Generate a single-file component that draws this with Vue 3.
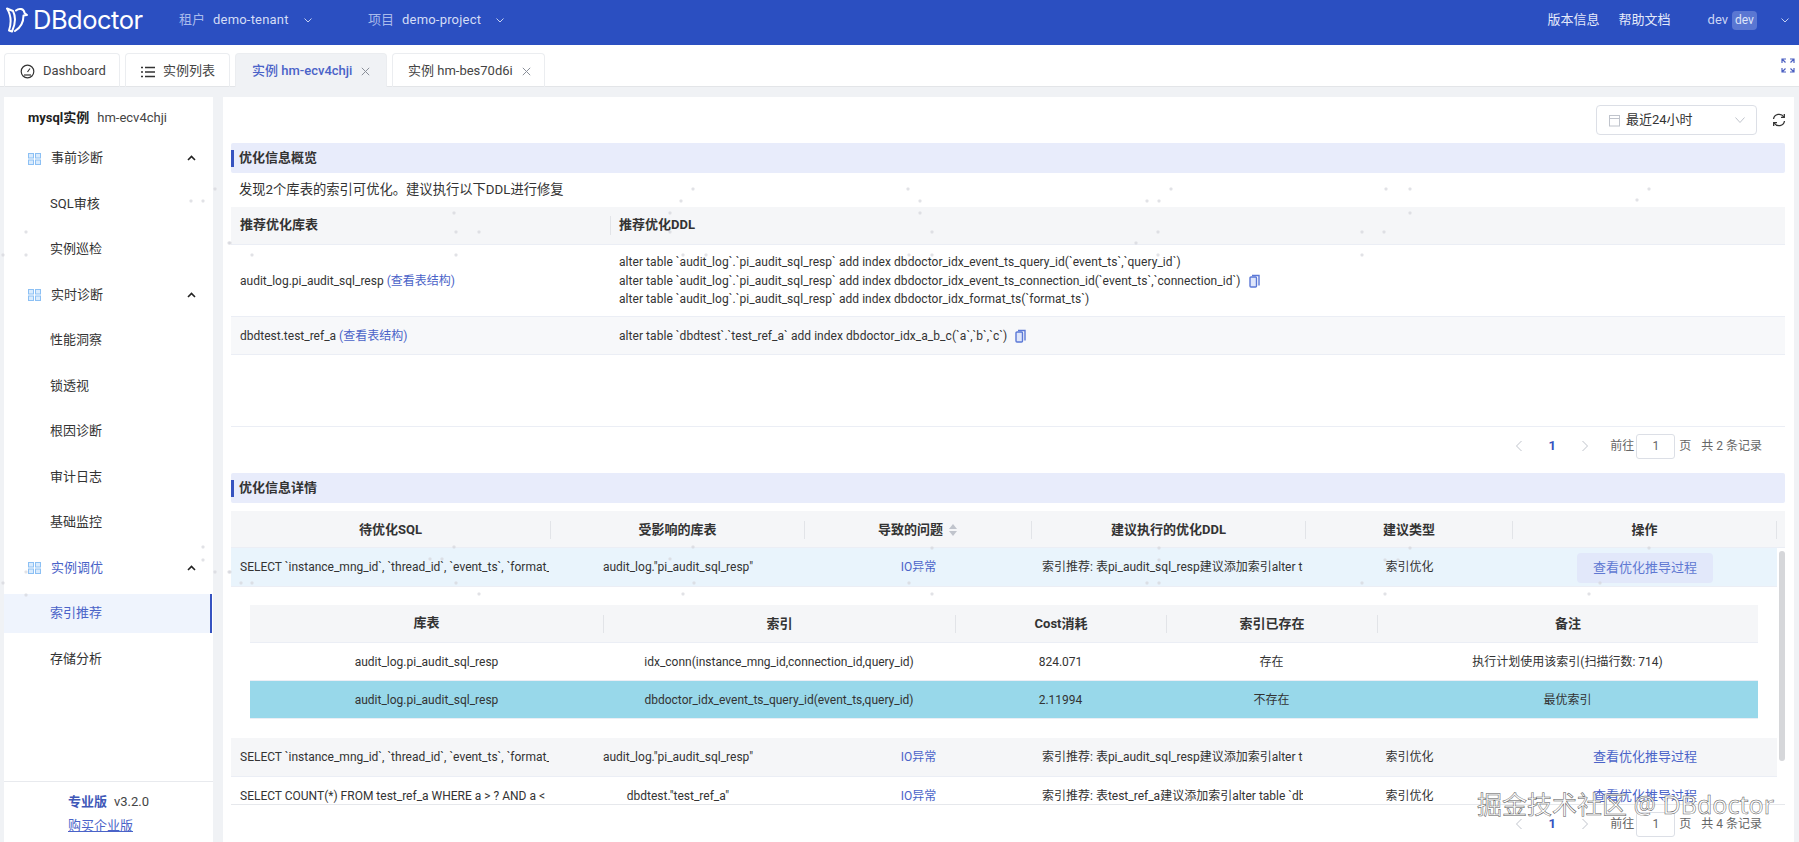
<script setup>
const menu = [
  { label: '事前诊断', group: true },
  { label: 'SQL审核' },
  { label: '实例巡检' },
  { label: '实时诊断', group: true },
  { label: '性能洞察' },
  { label: '锁透视' },
  { label: '根因诊断' },
  { label: '审计日志' },
  { label: '基础监控' },
  { label: '实例调优', group: true, tinted: true },
  { label: '索引推荐', active: true },
  { label: '存储分析' }
]
const ddl = [
  'alter table `audit_log`.`pi_audit_sql_resp` add index dbdoctor_idx_event_ts_query_id(`event_ts`,`query_id`)',
  'alter table `audit_log`.`pi_audit_sql_resp` add index dbdoctor_idx_event_ts_connection_id(`event_ts`,`connection_id`)',
  'alter table `audit_log`.`pi_audit_sql_resp` add index dbdoctor_idx_format_ts(`format_ts`)'
]
const sqlA = 'SELECT `instance_mng_id`, `thread_id`, `event_ts`, `format_sql`, `query_id`'
const ddlA = '索引推荐: 表pi_audit_sql_resp建议添加索引alter table `audit_log`'
const specks = [[454,213],[456,232],[479,232],[252,255],[456,255],[693,189],[681,201],[670,213],[670,232],[683,255],[706,255],[230,243],[908,189],[920,201],[920,213],[932,232],[909,255],[932,255],[1171,189],[1147,201],[1159,201],[1158,232],[1136,243],[1158,255],[1386,189],[1410,189],[1410,213],[1362,232],[1384,232],[1362,255],[454,547],[693,547],[670,559],[430,559],[442,559],[230,572],[241,583],[252,583],[456,583],[694,583],[479,594],[683,594],[932,548],[1159,548],[1159,560],[920,570],[909,583],[1147,583],[1159,583],[932,594],[1410,548],[1649,548],[1385,560],[1398,560],[1362,583],[1600,583],[1385,594],[1589,594],[1649,189],[1637,200],[215,189],[191,201],[203,201],[26,232],[3,255],[26,255],[229,243],[203,547],[203,560],[215,572],[26,572],[3,583],[26,595],[229,572]]
</script>

<template>
  <div class="page">
    <header class="topbar">
      <div class="logo">
        <svg class="logo-mark" width="22" height="26" viewBox="0 0 22 26" fill="none" stroke="#fff" stroke-width="2" stroke-linejoin="round" stroke-linecap="round">
          <path d="M1 1.500 L7 4 C9.500 9 9.500 17 6 24.500 L3 23.500 C5.500 16 5 8 1 1.500 Z" />
          <path d="M10 3.500 C13 .8 18 1.500 18.500 6 L21 8 L17.500 8.500 C17.500 15 14 21 9 24" />
        </svg>
        <span class="logo-text">DBdoctor</span>
      </div>
      <div class="scope scope-first">
        <span class="scope-key">租户</span><span class="scope-val">demo-tenant</span>
        <svg class="chev" width="10" height="10" viewBox="0 0 10 10"><path d="M1.500 3.500 5 7l3.500-3.500" fill="none" stroke="currentColor" stroke-width="1" /></svg>
      </div>
      <div class="scope scope-second">
        <span class="scope-key">项目</span><span class="scope-val">demo-project</span>
        <svg class="chev" width="10" height="10" viewBox="0 0 10 10"><path d="M1.500 3.500 5 7l3.500-3.500" fill="none" stroke="currentColor" stroke-width="1" /></svg>
      </div>
      <div class="top-right">
        <a class="top-link">版本信息</a>
        <a class="top-link">帮助文档</a>
        <span class="user">dev</span>
        <span class="user-badge">dev</span>
        <svg class="chev user-chev" width="10" height="10" viewBox="0 0 10 10"><path d="M1.500 3.500 5 7l3.500-3.500" fill="none" stroke="currentColor" stroke-width="1" /></svg>
      </div>
    </header>

    <nav class="tabs">
      <div class="tab tab-dash">
        <svg width="15" height="15" viewBox="0 0 15 15" fill="none" stroke="#333" stroke-width="1.200"><circle cx="7.500" cy="7.500" r="6.300" /><path d="M7.500 8 10 4.500" /><path d="M4 11h7" /></svg>
        <span>Dashboard</span>
      </div>
      <div class="tab tab-list">
        <svg width="14" height="12" viewBox="0 0 14 12" stroke="#333" stroke-width="1.300"><path d="M0 1.500h2M4 1.500h10M0 6h2M4 6h10M0 10.500h2M4 10.500h10" /></svg>
        <span>实例列表</span>
      </div>
      <div class="tab tab-on">
        <span>实例 hm-ecv4chji</span>
        <svg class="close" width="9" height="9" viewBox="0 0 9 9"><path d="M.8.8l7.400 7.400M8.200.8.800 8.200" stroke="#8a8f99" stroke-width="1" /></svg>
      </div>
      <div class="tab tab-other">
        <span>实例 hm-bes70d6i</span>
        <svg class="close" width="9" height="9" viewBox="0 0 9 9"><path d="M.8.8l7.400 7.400M8.200.8.800 8.200" stroke="#8a8f99" stroke-width="1" /></svg>
      </div>
      <svg class="expand" width="14" height="15" viewBox="0 0 14 15" fill="none" stroke="#4a5fc1" stroke-width="1.200"><path d="M1 5V1h4M1 1l3.500 3.500M13 5V1H9M13 1 9.500 4.500M1 10v4h4M1 14l3.500-3.500M13 10v4H9M13 14l-3.500-3.500" /></svg>
    </nav>

    <div class="body">
      <aside class="side">
        <div class="side-title"><b>mysql实例</b><span>hm-ecv4chji</span></div>
        <ul class="menu">
          <li v-for="m in menu" :key="m.label" class="menu-item" :class="{ 'is-group': m.group, 'is-active': m.active, 'is-tinted': m.tinted }">
            <svg v-if="m.group" class="menu-icon" width="13" height="12" viewBox="0 0 13 12" fill="#d9ebfd" stroke="#8cc0f4" stroke-width="1"><rect x=".5" y=".5" width="5" height="4.500" /><rect x="7.500" y=".5" width="5" height="4.500" /><rect x=".5" y="7" width="5" height="4.500" /><rect x="7.500" y="7" width="5" height="4.500" /></svg>
            <span>{{ m.label }}</span>
            <svg v-if="m.group" class="menu-caret" width="9" height="6" viewBox="0 0 9 6"><path d="M1 5 4.500 1.500 8 5" fill="none" stroke="#222" stroke-width="1.600" /></svg>
          </li>
        </ul>
        <div class="side-foot">
          <div><b class="edition">专业版</b><span class="version">v3.2.0</span></div>
          <a class="buy">购买企业版</a>
        </div>
      </aside>

      <main class="main">
        <div class="toolbar">
          <div class="date">
            <svg width="13" height="13" viewBox="0 0 13 13" fill="none" stroke="#c0c4cc"><rect x="1.500" y="1.500" width="10" height="10.500" /><path d="M1.500 4.500h10" /></svg>
            <span>最近24小时</span>
            <svg class="date-chev" width="12" height="12" viewBox="0 0 12 12"><path d="M1.500 3.500 6 8.500l4.500-5" fill="none" stroke="#c0c4cc" /></svg>
          </div>
          <svg class="refresh" width="14" height="14" viewBox="0 0 14 14" fill="none" stroke="#333" stroke-width="1.300"><path d="M1.500 6A5.600 5.600 0 0 1 11.800 4" /><path d="M12.500 8A5.600 5.600 0 0 1 2.200 10" /><path d="M12.300 1v3.300H9M1.700 13V9.700H5" /></svg>
        </div>

        <h3 class="section">优化信息概览</h3>
        <p class="desc">发现2个库表的索引可优化。建议执行以下DDL进行修复</p>

        <div class="t1">
          <div class="t1-row t1-head">
            <div class="t1-cell"><span>推荐优化库表</span></div>
            <div class="t1-cell t1-sep"><span>推荐优化DDL</span></div>
          </div>
          <div class="t1-row t1-tall">
            <div class="t1-cell t1-text"><span>audit_log.pi_audit_sql_resp <a class="link">(查看表结构)</a></span></div>
            <div class="t1-cell t1-ddl">
              <div v-for="(d, i) in ddl" :key="d" class="ddl-line">
                {{ d }}
                <svg v-if="i === 1" class="copy" width="11" height="14" viewBox="0 0 11 14" fill="none" stroke="#5b78d6" stroke-width="1.400"><path d="M3 1.500h7v10" /><rect x="1" y="3" width="6.500" height="10" rx="1" fill="#dfe6fa" /></svg>
              </div>
            </div>
          </div>
          <div class="t1-row t1-zebra">
            <div class="t1-cell t1-text"><span>dbdtest.test_ref_a <a class="link">(查看表结构)</a></span></div>
            <div class="t1-cell t1-ddl">
              <div class="ddl-line">
                alter table `dbdtest`.`test_ref_a` add index dbdoctor_idx_a_b_c(`a`,`b`,`c`)
                <svg class="copy" width="11" height="14" viewBox="0 0 11 14" fill="none" stroke="#5b78d6" stroke-width="1.400"><path d="M3 1.500h7v10" /><rect x="1" y="3" width="6.500" height="10" rx="1" fill="#dfe6fa" /></svg>
              </div>
            </div>
          </div>
        </div>

        <div class="pager pager-first">
          <svg width="8" height="12" viewBox="0 0 8 12"><path d="M6.500 1 1.500 6l5 5" fill="none" stroke="#c0c4cc" /></svg>
          <b class="pg-num">1</b>
          <svg width="8" height="12" viewBox="0 0 8 12"><path d="M1.500 1l5 5-5 5" fill="none" stroke="#c0c4cc" /></svg>
          <span class="pg-go">前往</span><span class="pg-input">1</span><span class="pg-unit">页</span><span class="pg-total">共 2 条记录</span>
        </div>

        <h3 class="section">优化信息详情</h3>

        <div class="t2">
          <div class="t2-row t2-head">
            <div class="t2-h">待优化SQL</div>
            <div class="t2-h">受影响的库表</div>
            <div class="t2-h">导致的问题
              <svg class="sort" width="10" height="14" viewBox="0 0 10 14" fill="#c0c4cc"><path d="M5 1l4 5H1zM5 13 1 8h8z" /></svg>
            </div>
            <div class="t2-h">建议执行的优化DDL</div>
            <div class="t2-h">建议类型</div>
            <div class="t2-h">操作</div>
          </div>
          <div class="t2-scroll">
            <div class="t2-row t2-hover">
              <div class="clip">{{ sqlA }}</div><div class="mid">audit_log."pi_audit_sql_resp"</div><div class="mid link">IO异常</div><div class="clip ddl-clip">{{ ddlA }}</div><div class="mid">索引优化</div>
              <div class="mid"><a class="trace trace-on">查看优化推导过程</a></div>
            </div>

            <div class="expanded">
              <div class="sub-row sub-head"><div>库表</div><div>索引</div><div>Cost消耗</div><div>索引已存在</div><div>备注</div></div>
              <div class="sub-row"><div>audit_log.pi_audit_sql_resp</div><div>idx_conn(instance_mng_id,connection_id,query_id)</div><div>824.071</div><div>存在</div><div>执行计划使用该索引(扫描行数: 714)</div></div>
              <div class="sub-row sub-best"><div>audit_log.pi_audit_sql_resp</div><div>dbdoctor_idx_event_ts_query_id(event_ts,query_id)</div><div>2.11994</div><div>不存在</div><div>最优索引</div></div>
            </div>

            <div class="t2-row t2-zebra">
              <div class="clip">{{ sqlA }}</div><div class="mid">audit_log."pi_audit_sql_resp"</div><div class="mid link">IO异常</div><div class="clip ddl-clip">{{ ddlA }}</div><div class="mid">索引优化</div>
              <div class="mid"><a class="trace">查看优化推导过程</a></div>
            </div>
            <div class="t2-row">
              <div class="clip">SELECT COUNT(*) FROM test_ref_a WHERE a &gt; ? AND a &lt;</div><div class="mid">dbdtest."test_ref_a"</div><div class="mid link">IO异常</div><div class="clip ddl-clip">索引推荐: 表test_ref_a建议添加索引alter table `dbdtest`</div><div class="mid">索引优化</div>
              <div class="mid"><a class="trace">查看优化推导过程</a></div>
            </div>
            <div class="thumb"></div>
          </div>
        </div>

        <div class="pager pager-second">
          <svg width="8" height="12" viewBox="0 0 8 12"><path d="M6.500 1 1.500 6l5 5" fill="none" stroke="#c0c4cc" /></svg>
          <b class="pg-num">1</b>
          <svg width="8" height="12" viewBox="0 0 8 12"><path d="M1.500 1l5 5-5 5" fill="none" stroke="#c0c4cc" /></svg>
          <span class="pg-go">前往</span><span class="pg-input">1</span><span class="pg-unit">页</span><span class="pg-total">共 4 条记录</span>
        </div>
      </main>
    </div>

    <svg class="specks" width="1799" height="842"><rect v-for="(p, i) in specks" :key="i" :x="p[0] - 1.5" :y="p[1] - 1.5" width="3" height="3" rx="1" fill="#d4d6dc" opacity=".7" /></svg>
    <div class="mark">掘金技术社区 @ DBdoctor</div>
  </div>
</template>

<style>
html, body { margin: 0; background: #f0f2f5; }
</style>

<style scoped>
.page {
  position: relative;
  width: 1799px;
  height: 842px;
  overflow: hidden;
  background: #f0f2f5;
  color: #333;
  font: 12px/1.4 Roboto, "Noto Sans CJK SC", sans-serif;
}
a { color: inherit; }
ul { list-style: none; margin: 0; padding: 0; }
h3, p { margin: 0; }

.topbar {
  height: 45px;
  box-sizing: border-box;
  padding-bottom: 5px;
  display: flex;
  align-items: center;
  background: #2b4fc1;
  color: #c5d1f3;
  font-size: 13px;
}
.logo { width: 179px; padding-left: 6px; display: flex; align-items: center; box-sizing: border-box; }
.logo-mark { flex: none; }
.logo-text { margin-left: 5px; font: 400 25.500px/32px Inter, sans-serif; letter-spacing: -.5px; color: #fff; }
.scope { display: flex; align-items: center; }
.scope-first { width: 189px; }
.scope-key { width: 34px; color: #a9bbec; }
.scope-val { color: #d4ddf6; letter-spacing: .2px; }
.chev { margin-left: 14px; color: #c5d1f3; }
.top-right { margin-left: auto; display: flex; align-items: center; padding-right: 9px; }
.top-link { color: #e4e9fa; margin-right: 19px; }
.top-link + .top-link { margin-right: 37px; }
.user { color: #ccd6f5; }
.user-badge { margin-left: 4px; height: 19px; width: 25px; border-radius: 4px; background: #5a77d2; color: #dfe6fa; font-size: 12px; line-height: 19px; text-align: center; }
.user-chev { margin-left: 23px; }

.tabs {
  position: relative;
  height: 42px;
  box-sizing: border-box;
  padding: 8px 0 0 4px;
  display: flex;
  gap: 5px;
  background: #fff;
  border-bottom: 1px solid #e3e5e8;
  font-size: 13px;
}
.tab {
  height: 34px;
  box-sizing: border-box;
  display: flex;
  align-items: center;
  gap: 8px;
  padding-top: 2px;
  border: 1px solid #ebedf0;
  border-bottom: 0;
  border-radius: 4px 4px 0 0;
  color: #444;
}
.tab-dash { width: 116px; padding-left: 15px; }
.tab-list { width: 105px; padding-left: 15px; }
.tab-on { width: 152px; padding-left: 16px; background: #f0f2f5; color: #4a63c8; font-weight: 500; gap: 9px; }
.tab-other { width: 153px; padding-left: 15px; gap: 9px; }
.expand { position: absolute; right: 4px; top: 13px; }

.body { display: flex; height: 755px; padding: 10px 5px 0 4px; gap: 10px; box-sizing: border-box; }
.side { width: 209px; flex: none; display: flex; flex-direction: column; background: #fff; }
.side-title { height: 42px; padding-left: 24px; display: flex; align-items: center; gap: 8px; font-size: 13px; color: #444; }
.side-title b { color: #222; }
.menu { flex: 1; }
.menu-item {
  height: 39px;
  margin-bottom: 6.500px;
  display: flex;
  align-items: center;
  padding-left: 46px;
  position: relative;
  font-size: 13px;
  color: #333;
}
.menu-item.is-group { padding-left: 24px; }
.menu-icon { margin-right: 10px; }
.menu-caret { position: absolute; left: 183px; top: 16px; }
.is-tinted { color: #4a63c8; }
.is-active { background: #eff4fd; color: #4a63c8; box-shadow: inset -2px 0 0 #3653c0; margin-right: 1px; }
.side-foot { height: 61px; border-top: 1px solid #e8eaee; padding: 8px 0 0 64px; box-sizing: border-box; font-size: 13px; line-height: 24px; }
.edition { color: #3f58b8; }
.version { margin-left: 7px; color: #444; }
.buy { color: #4a63c8; text-decoration: underline; }

.main { flex: 1; min-width: 0; background: #fff; padding: 8px 9px 0 8px; box-sizing: border-box; }
.toolbar { height: 30px; margin: 0 -2px 8px 0; display: flex; justify-content: flex-end; align-items: center; gap: 15px; padding-right: 1px; }
.date { width: 161px; height: 30px; box-sizing: border-box; border: 1px solid #dcdfe6; border-radius: 4px; display: flex; align-items: center; gap: 5px; padding: 0 10px 0 11px; font-size: 13px; color: #333; }
.date-chev { margin-left: auto; }
.section {
  height: 30px;
  line-height: 30px;
  background: #e8ecfb;
  position: relative;
  padding-left: 8px;
  font-size: 13px;
  font-weight: 700;
  color: #333;
  border-radius: 2px;
}
.section::before { content: ""; position: absolute; left: 0; top: 7px; width: 3px; height: 17px; background: #3653c0; }
.desc { height: 34px; line-height: 34px; padding-left: 8px; font-size: 13.300px; }

.t1 { height: 220px; border-bottom: 1px solid #ebeef5; box-sizing: border-box; }
.t1-row { display: grid; grid-template-columns: 379px 1fr; border-bottom: 1px solid #ebeef5; height: 38px; box-sizing: border-box; }
.t1-head { height: 38px; background: #f5f6f8; font-weight: 700; font-size: 13px; }
.t1-tall { height: 72px; }
.t1-zebra { background: #f7f8fa; }
.t1-cell { display: flex; align-items: center; padding-left: 9px; position: relative; }
.t1-text { padding-top: 1px; }
.t1-sep::before { content: ""; position: absolute; left: 0; top: 9px; bottom: 9px; width: 1px; background: #e2e4e8; }
.t1-ddl { display: block; align-self: center; padding-top: 1px; }
.ddl-line { line-height: 18.700px; white-space: nowrap; letter-spacing: .05px; }
.copy { margin-left: 5px; vertical-align: -3px; }
.link { color: #4a63c8; }

.pager { display: flex; align-items: center; justify-content: flex-end; padding-right: 23px; color: #666; box-sizing: border-box; }
.pager-first { height: 46px; padding-bottom: 8px; }
.pager-second { height: 38px; }
.pg-num { width: 58px; text-align: center; color: #3653c0; font-size: 13px; }
.pg-go { margin-left: 21px; margin-right: 2px; }
.pg-input { width: 39px; height: 25px; box-sizing: border-box; border: 1px solid #dcdfe6; border-radius: 3px; line-height: 23px; text-align: center; }
.pg-unit { margin-left: 4px; }
.pg-total { margin-left: 10px; }

.t2 { margin-top: 8px; border-bottom: 1px solid #e6e8ec; }
.t2-row { display: grid; grid-template-columns: 320px 254px 227px 274px 207px 264px; height: 39px; align-items: center; box-sizing: border-box; border-bottom: 1px solid #ebeef5; padding-top: 1px; }
.t2-head { height: 37px; width: 100%; grid-template-columns: 320px 254px 227px 274px 207px 264px 8px; background: #f5f6f8; font-weight: 700; font-size: 13px; }
.t2-h { text-align: center; height: 18px; line-height: 18px; border-right: 1px solid #e2e4e8; display: flex; justify-content: center; align-items: center; gap: 5px; }
.t2-scroll { position: relative; height: 256px; overflow: hidden; }
.t2-scroll > .t2-row { width: 1546px; }
.t2-hover { background: #e9f4fc; }
.t2-zebra { background: #f5f6f8; }
.clip { padding-left: 9px; margin-right: 2px; white-space: nowrap; overflow: hidden; }
.ddl-clip { padding-left: 10px; margin-right: 3px; }
.mid { text-align: center; }
.trace { color: #4a63c8; font-size: 13px; }
.trace-on { display: inline-block; width: 136px; height: 30px; line-height: 30px; background: #e2e8fa; color: #5f78d2; border-radius: 4px; }
.expanded { height: 151px; box-sizing: border-box; padding: 18px 19px 0; width: 1546px; }
.sub-row { display: grid; grid-template-columns: 353px 352px 211px 211px 381px; height: 38px; align-items: center; text-align: center; border-bottom: 1px solid #ebeef5; box-sizing: border-box; padding-top: 1px; }
.sub-head { background: #f5f6f8; font-weight: 700; font-size: 13px; padding-top: 0; }
.sub-head > div + div { border-left: 1px solid #e2e4e8; height: 18px; line-height: 18px; }
.sub-best { background: #98d8ea; color: #333; }
.thumb { position: absolute; right: 0; top: 3px; width: 6px; height: 210px; background: #d6d7da; border-radius: 3px; }

.specks { position: absolute; left: 0; top: 0; pointer-events: none; }
.mark {
  position: absolute;
  left: 1477px;
  top: 789px;
  font: 25px/30px "Noto Sans", "Noto Sans CJK SC", sans-serif;
  white-space: nowrap;
  color: #fff;
  pointer-events: none;
  -webkit-text-stroke: .5px #555;
}
</style>
